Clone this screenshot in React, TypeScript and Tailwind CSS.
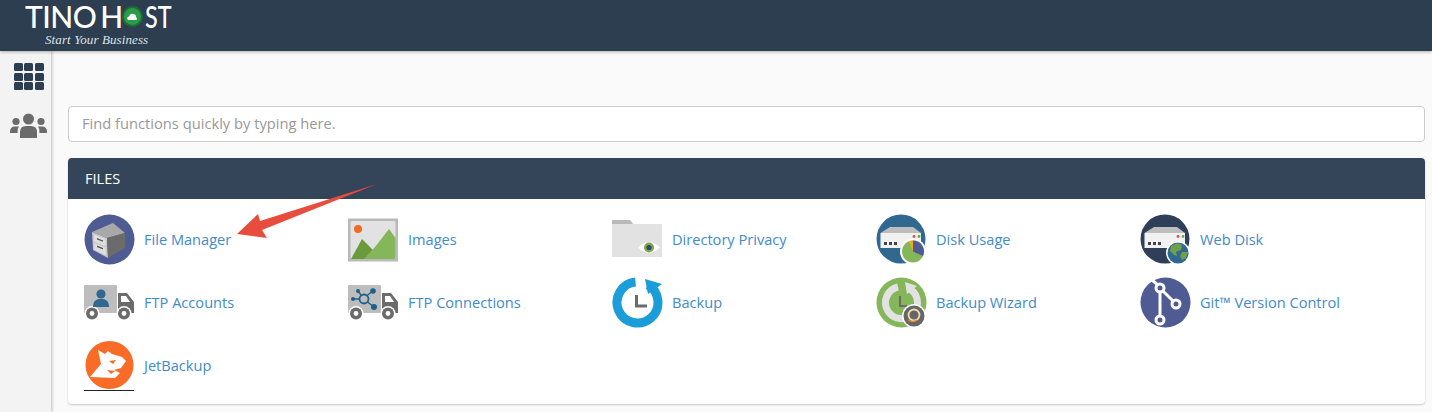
import type { ReactNode } from 'react';

const sans = { fontFamily: '"Open Sans", sans-serif' };

function FileManagerIcon() {
  return (
    <svg viewBox="0 0 51 51" className="w-[51px] h-[51px]">
      <circle cx="25.5" cy="25.5" r="25" fill="#4f5b93" />
      <path d="M8 18 L29 9 L41 19 L23 24 Z" fill="#a9a9ab" />
      <path d="M8 18 L23 24 L24 44 L9 36 Z" fill="#c9c9cc" />
      <path d="M23 24 L41 19 L41 34 L24 44 Z" fill="#6b6b6b" />
      <path d="M10 20.5 L21.5 25 L21.5 32 L10 27.5 Z" fill="#dedee0" />
      <path d="M10 29 L21.5 33.5 L22 41.5 L10.5 35.5 Z" fill="#dedee0" />
      <path d="M13 24 L19 26.4 L19 27.8 L13 25.4 Z M13 31.5 L19 34 L19 35.4 L13 33 Z" fill="#555" />
    </svg>
  );
}

function ImagesIcon() {
  return (
    <svg viewBox="0 0 51 51" className="w-[51px] h-[51px]">
      <rect x="0" y="4.5" width="50" height="43" fill="#b9b9b9" />
      <rect x="2.5" y="7" width="45" height="38" rx="1.5" fill="#e2e2e2" />
      <circle cx="10" cy="15" r="4" fill="#f26a21" />
      <path d="M3 45 L14 25 L25 36 L17 45 Z" fill="#6b9a3b" />
      <path d="M16 45 L27 33 L41 15 L47.5 24 L47.5 43 Q47.5 45 46 45 Z" fill="#85b75a" />
    </svg>
  );
}

function FolderEyeIcon() {
  return (
    <svg viewBox="0 0 51 51" className="w-[51px] h-[51px]">
      <path d="M0 7 Q0 6 1 6 L18 6 L21 10 L0 10 Z" fill="#b9b9b9" />
      <path d="M0 10 L49 10 Q50 10 50 11 L50 43 L0 43 Z" fill="#e2e2e2" />
      <path d="M26 33.5 Q37 22.5 48 33.5 Q37 44 26 33.5 Z" fill="#ffffff" />
      <circle cx="37" cy="33.5" r="5" fill="#7fa650" />
      <circle cx="37" cy="33.5" r="2.6" fill="#34495e" />
    </svg>
  );
}

function ServerShape() {
  return (
    <>
      <path d="M4.5 19 L14 13 L37 13 L45 19 Z" fill="#bdbdbd" />
      <rect x="4.5" y="19" width="40.5" height="15" fill="#f1f1f1" />
      <rect x="8" y="28" width="3" height="3" fill="#444" />
      <rect x="13" y="28" width="3" height="3" fill="#444" />
      <rect x="18" y="28" width="3" height="3" fill="#444" />
      <circle cx="38" cy="22.5" r="1.4" fill="#e74c3c" />
      <circle cx="43" cy="22.5" r="1.4" fill="#6aa84f" />
    </>
  );
}

function DiskUsageIcon() {
  return (
    <svg viewBox="0 0 51 51" className="w-[51px] h-[51px]">
      <circle cx="25" cy="25" r="24.5" fill="#30688f" />
      <ServerShape />
      <circle cx="37" cy="37.5" r="13" fill="#ffffff" />
      <circle cx="37" cy="37.5" r="11" fill="#85b75a" />
      <path d="M37 37.5 L37 26.5 A11 11 0 0 1 47 42 Z" fill="#4f5b93" />
      <path d="M37 37.5 L33 27.3 A11 11 0 0 1 37 26.5 Z" fill="#f5a623" />
    </svg>
  );
}

function WebDiskIcon() {
  return (
    <svg viewBox="0 0 51 51" className="w-[51px] h-[51px]">
      <circle cx="25" cy="25" r="24.5" fill="#2f3f5a" />
      <ServerShape />
      <circle cx="38" cy="39" r="12" fill="#ffffff" />
      <circle cx="38" cy="39" r="10.5" fill="#30688f" />
      <path d="M31 32 L38 29 L42 31 L41 36 L36 38 L37 42 L34 41 L30 37 Z M42 38 L48 38 L46 44 L42 46 L40 42 Z" fill="#6fa04b" />
    </svg>
  );
}

function TruckBase({ children }: { children?: ReactNode }) {
  return (
    <svg viewBox="0 0 51 51" className="w-[51px] h-[51px]">
      <path d="M0 9 Q0 8 1 8 L32 8 Q33 8 33 9 L33 36 L0 36 Z" fill="#bdbdbd" />
      <path d="M34 16 L43 16 L50 25 L50 36 L34 36 Z" fill="#6b6b6b" />
      <path d="M37 19 L42 19 L46 25 L37 25 Z" fill="#ffffff" />
      <circle cx="8" cy="36.5" r="7.5" fill="#ffffff" />
      <circle cx="8" cy="36.5" r="6" fill="#6b6b6b" />
      <circle cx="8" cy="36.5" r="2.4" fill="#ffffff" />
      <circle cx="40" cy="36.5" r="7.5" fill="#ffffff" />
      <circle cx="40" cy="36.5" r="6" fill="#6b6b6b" />
      <circle cx="40" cy="36.5" r="2.4" fill="#ffffff" />
      {children}
    </svg>
  );
}

function FtpAccountsIcon() {
  return (
    <TruckBase>
      <circle cx="17" cy="17" r="4.6" fill="#30688f" />
      <path d="M9 30 Q9 23 14.5 22 L19.5 22 Q25 23 25 30 Z" fill="#30688f" />
    </TruckBase>
  );
}

function FtpConnectionsIcon() {
  return (
    <TruckBase>
      <g stroke="#1f5f8b" strokeWidth="1.4" fill="none">
        <circle cx="16" cy="22" r="4.5" strokeWidth="1.8" />
        <path d="M5 22 L11.5 22 M10 14 L13 18 M19 18.5 L25 14 M19.5 25 L26 30" />
      </g>
      <g fill="#1f5f8b">
        <circle cx="5" cy="22" r="2" />
        <circle cx="10" cy="14" r="2" />
        <circle cx="25" cy="14" r="2.8" />
        <circle cx="26" cy="30" r="3" />
      </g>
    </TruckBase>
  );
}

function BackupIcon() {
  return (
    <svg viewBox="0 0 51 51" className="w-[51px] h-[51px]">
      <path d="M23.5 5.1 A20.5 20.5 0 1 0 36 7.9" fill="none" stroke="#1b9dd9" strokeWidth="9" />
      <path d="M33 2 L50 7 L36 17 Z" fill="#1b9dd9" />
      <path d="M23 18 L26 18 L26 27.5 L35 27.5 L35 30.5 L23 30.5 Z" fill="#6b6b6b" />
    </svg>
  );
}

function BackupWizardIcon() {
  return (
    <svg viewBox="0 0 51 51" className="w-[51px] h-[51px]">
      <circle cx="25.5" cy="25.5" r="25" fill="#85b75a" />
      <path d="M22 10 A16 16 0 1 0 32 11" fill="none" stroke="#e2e2e2" strokeWidth="7" />
      <path d="M29 5 L41 9 L31 17 Z" fill="#e2e2e2" />
      <path d="M23 19 L25 19 L25 28 L31 28 L31 30 L23 30 Z" fill="#6b6b6b" />
      <circle cx="38" cy="39" r="12" fill="#ffffff" />
      <circle cx="38" cy="39" r="10.5" fill="#666" />
      <circle cx="38" cy="38" r="5.5" fill="none" stroke="#f0ddb0" strokeWidth="1.8" />
      <path d="M32 43 Q37 46 41 43" fill="none" stroke="#d98c2b" strokeWidth="1.4" />
    </svg>
  );
}

function GitIcon() {
  return (
    <svg viewBox="0 0 51 51" className="w-[51px] h-[51px]">
      <circle cx="25.5" cy="25.5" r="25" fill="#4f5b93" />
      <g stroke="#ffffff" strokeWidth="3" fill="none">
        <path d="M12 3 L18 8" />
        <path d="M20 15 L20 39" />
        <path d="M23 14 L33 24" />
        <circle cx="20" cy="11" r="4" />
        <circle cx="36" cy="27" r="4" />
        <circle cx="20" cy="43" r="4" />
      </g>
    </svg>
  );
}

function JetBackupIcon() {
  return (
    <svg viewBox="0 0 51 51" className="w-[51px] h-[51px]">
      <circle cx="25.5" cy="25" r="24" fill="#f96b26" />
      <path
        d="M6 37 L17 24 L14 10 L21 14 L24 11 L28 14 L38 17 L42 21 L37 28 L30 30 L36 33 L31 38 Z"
        fill="#ffffff"
      />
      <path d="M25 21 L32 20 L29 24 Z M23 30 L31 31 L27 34 Z" fill="#f96b26" />
      <rect x="0" y="50" width="50" height="1" fill="#222" />
    </svg>
  );
}

const tools = [
  { name: 'File Manager', icon: <FileManagerIcon /> },
  { name: 'Images', icon: <ImagesIcon /> },
  { name: 'Directory Privacy', icon: <FolderEyeIcon /> },
  { name: 'Disk Usage', icon: <DiskUsageIcon /> },
  { name: 'Web Disk', icon: <WebDiskIcon /> },
  { name: 'FTP Accounts', icon: <FtpAccountsIcon /> },
  { name: 'FTP Connections', icon: <FtpConnectionsIcon /> },
  { name: 'Backup', icon: <BackupIcon /> },
  { name: 'Backup Wizard', icon: <BackupWizardIcon /> },
  { name: 'Git™ Version Control', icon: <GitIcon /> },
  { name: 'JetBackup', icon: <JetBackupIcon /> },
];

export default function App() {
  return (
    <div className="relative h-[412px] w-[1432px] overflow-hidden bg-[#fafafa]" style={sans}>
      {/* Top bar */}
      <header className="relative z-20 h-[51px] bg-[#2c3e50] pl-[25px] pt-[1px] shadow-[0_1px_3px_rgba(0,0,0,0.3)]">
        <div className="flex h-[31px] items-center font-medium text-[30px] leading-[31px] text-white" style={{ fontFamily: 'Lato, sans-serif' }}>
          <span className="tracking-[-0.5px]">TINO</span>
          <span className="ml-[4px] tracking-[-1.5px]">H</span>
          <span className="flex h-[21px] w-[21px] items-center justify-center rounded-full border-2 border-[#1d6b3a] bg-[#2a9c48]">
            <svg viewBox="0 0 12 12" className="h-[12px] w-[12px]">
              <path d="M2 9 Q0 6 3 5.5 Q4 2 7 3 Q10 3 10 6 Q12 8 10 9 Z" fill="#fff" />
            </svg>
          </span>
          <span className="ml-[2px] inline-block origin-left scale-x-[0.78]">ST</span>
        </div>
        <div className="pl-[20px] pt-[1px] text-[13px] leading-[14px] italic text-[#dfe3e6] tracking-[0.1px]" style={{ fontFamily: '"Liberation Serif", serif' }}>
          Start Your Business
        </div>
      </header>

      <div className="flex h-[361px]">
        {/* Side nav */}
        <aside className="z-10 flex w-[51px] shrink-0 flex-col items-center bg-[#f3f3f3] pl-[6px] pt-[12px] shadow-[1px_0_3px_rgba(0,0,0,0.25)]">
          <div className="grid grid-cols-3 gap-[1.5px]">
            {Array.from({ length: 9 }).map((_, i) => (
              <div key={i} className="h-[8px] w-[9px] rounded-[1.5px] bg-[#2c3e50]" />
            ))}
          </div>
          <svg viewBox="0 0 37 26" className="mt-[23px] h-[26px] w-[37px]" fill="#6b6b6b">
            <circle cx="18.5" cy="6" r="5.5" />
            <circle cx="6" cy="8.5" r="3.6" />
            <circle cx="31" cy="8.5" r="3.6" />
            <path d="M10 25 L10 19 Q10 13 16 13 L21 13 Q27 13 27 19 L27 25 Z" />
            <path d="M0 19 Q0 13.5 5 13.5 L9 13.5 Q7 16 7.5 20 L0 20 Z" />
            <path d="M37 19 Q37 13.5 32 13.5 L28 13.5 Q30 16 29.5 20 L37 20 Z" />
          </svg>
        </aside>

        {/* Main */}
        <main className="flex-1 pl-[17px] pr-[7px] pt-[55px]">
          <div className="flex h-[36px] items-center rounded-[4px] border border-[#cccccc] bg-white px-[13px] pb-[2px] text-[14.7px] text-[#999999]">
            Find functions quickly by typing here.
          </div>

          <section className="mt-[16px] h-[246px] rounded-[4px] bg-white shadow-[0_1px_2px_rgba(0,0,0,0.2)]">
            <div className="flex h-[41px] items-center rounded-t-[4px] bg-[#34455a] pl-[17px] text-[14.6px] text-white">
              FILES
            </div>
            <div className="grid grid-cols-[repeat(5,264px)] auto-rows-[63px] pl-[16px] pt-[15px]">
              {tools.map((t) => (
                <a key={t.name} className="flex h-[51px] items-center gap-[9px] text-[14.6px] text-[#428bca]">
                  {t.icon}
                  <span>{t.name}</span>
                </a>
              ))}
            </div>
          </section>
        </main>
      </div>

      {/* Annotation arrow */}
      <svg className="absolute left-0 top-0 z-30 pointer-events-none" width="1432" height="412">
        <polygon points="237,234 258,214 260,221 377,184 262,230 267,238" fill="#e74c3c" />
      </svg>
    </div>
  );
}
